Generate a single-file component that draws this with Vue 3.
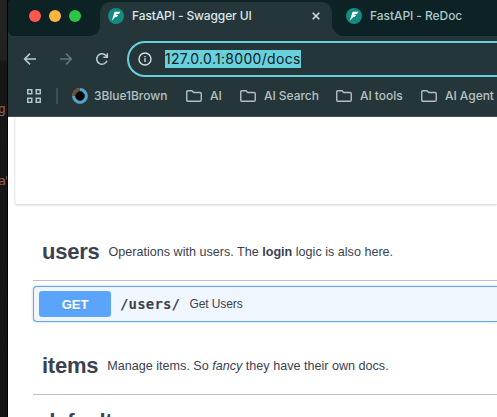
<script setup>
const folders = [
  { label: 'AI', cls: 'f-ai' },
  { label: 'AI Search', cls: 'f-search' },
  { label: 'AI tools', cls: 'f-tools' },
  { label: 'AI Agent', cls: 'f-agent' },
]
</script>

<template>
  <div class="screen">
    <aside class="backdrop">
      <span class="code first">g</span>
      <span class="code second">a'</span>
    </aside>
    <div class="browser">
      <header class="strip">
        <div class="lights">
          <i class="red"></i><i class="yellow"></i><i class="green"></i>
        </div>
        <div class="tab active">
          <svg class="bolt" viewBox="0 0 16 16"><circle cx="8" cy="8" r="8" fill="#128c80" /><path d="M6.6 3.8H12.4L10.9 6H8.6L8.2 6.8H10.3L8.8 9H7.2L3.8 12.8Z" fill="#fff" /></svg>
          <span class="title t1">FastAPI - Swagger UI</span>
          <svg class="close" viewBox="0 0 8 8"><path d="M.7.7 7.3 7.3M7.3.7.7 7.3" stroke="#d9e2e3" stroke-width="1.5" /></svg>
        </div>
        <div class="tab other">
          <svg class="bolt" viewBox="0 0 16 16"><circle cx="8" cy="8" r="8" fill="#128c80" /><path d="M6.6 3.8H12.4L10.9 6H8.6L8.2 6.8H10.3L8.8 9H7.2L3.8 12.8Z" fill="#fff" /></svg>
          <span class="title t2">FastAPI - ReDoc</span>
        </div>
      </header>
      <div class="toolbar">
        <svg class="nav" viewBox="0 0 14 14"><path d="M13 7H1.8M7 1.6 1.6 7 7 12.4" /></svg>
        <svg class="nav dim" viewBox="0 0 14 14"><path d="M1 7H12.2M7 1.6 12.4 7 7 12.4" /></svg>
        <svg class="nav" viewBox="0 0 14 14"><path d="M11.9 8.7A5.2 5.2 0 1 1 10.9 3.6L12.3 5M12.3 1.2V5.2H8.3" /></svg>
        <div class="address">
          <svg class="info" viewBox="0 0 14 14"><circle cx="7" cy="7" r="6" /><path d="M7 6.3V10.1M7 3.9V5.2" /></svg>
          <span class="url">127.0.0.1:8000/docs</span>
        </div>
      </div>
      <nav class="bookmarks">
        <svg class="apps" viewBox="0 0 14 14"><path d="M.75.75h4v4h-4zM9.25.75h4v4h-4zM.75 9.25h4v4h-4zM9.25 9.25h4v4h-4z" /></svg>
        <i class="sep"></i>
        <svg class="eye" viewBox="0 0 16 16"><circle cx="8" cy="8" r="6.3" fill="#285069" stroke="#5b9fc4" stroke-width="3.2" /><path d="M1.7 8A6.3 6.3 0 0 1 8 1.7" fill="none" stroke="#794b2b" stroke-width="3.2" /><circle cx="8" cy="8" r="4.4" fill="#020304" stroke="#13232e" stroke-width=".8" /></svg>
        <span class="label brown">3Blue1Brown</span>
        <div v-for="f in folders" :key="f.label" class="folder" :class="f.cls">
          <svg viewBox="0 0 16 12"><path d="M.75 10V2Q.75.75 2 .75H6L7.7 2.5H14Q15.25 2.5 15.25 3.7V10Q15.25 11.25 14 11.25H2Q.75 11.25.75 10Z" /></svg>
          <span class="label">{{ f.label }}</span>
        </div>
      </nav>
      <main class="page">
        <div class="panel"></div>
        <section class="docs">
          <div class="tag">
            <h3 class="users">users</h3>
            <p class="d1">Operations with users. The <b>login</b> logic is also here.</p>
          </div>
          <div class="operation">
            <span class="method">GET</span>
            <code>/users/</code>
            <span class="summary">Get Users</span>
          </div>
          <div class="tag second">
            <h3 class="items">items</h3>
            <p class="d2">Manage items. So <em>fancy</em> they have their own docs.</p>
          </div>
          <div class="tag last"><h3 class="default">default</h3></div>
        </section>
      </main>
    </div>
  </div>
</template>

<style>
body { margin: 0; overflow: hidden; }
</style>

<style scoped>
* { box-sizing: border-box; }
svg { display: block; flex: none; }
.screen { width: 497px; height: 417px; overflow: hidden; display: flex; background: #151515; }
.backdrop { width: 8px; flex: none; overflow: hidden; background: linear-gradient(#242424 0, #202020 60px, #171717 61px, #151515 100%); border-right: 1px solid #000; display: flex; flex-direction: column; }
.code { font: 13px/16px "DejaVu Sans Mono", monospace; color: #91604d; height: 16px; }
.code.first { margin: 101px 0 0 -2px; }
.code.second { margin: 56px 0 0 -2px; letter-spacing: -3px; }
.browser { width: 489px; flex: none; height: 417px; border-radius: 6px 0 0; overflow: hidden; background: #24363a; }
.strip { height: 36px; display: flex; background: #24363a; }
.lights { width: 92px; flex: none; display: flex; gap: 8px; padding: 10px 0 0 21px; background: #0d2224; border-radius: 0 0 10px 6px; }
.lights i { width: 12px; height: 12px; border-radius: 50%; }
.red { background: #ff5750; }
.yellow { background: #ffb53a; }
.green { background: #2bc545; }
.tab { display: flex; align-items: center; height: 36px; flex: none; }
.active { width: 232px; background: linear-gradient(#0d2224, #0d2224) 0 0 / 100% 18px no-repeat; position: relative; padding: 0 12px 4px 8px; z-index: 0; }
.active::before { content: ""; position: absolute; z-index: -1; inset: 2px 0 0; background: #24363a; border-radius: 10px 10px 0 0; }
.other { width: 165px; background: #0d2224; border-radius: 0 0 0 12px; padding: 0 0 4px 14px; }
.bolt { width: 16px; height: 16px; }
.title { font: 500 12px/16px Inter, sans-serif; margin-left: 8px; white-space: nowrap; color: #dce6e7; }
.t1 { letter-spacing: -.12px; }
.t2 { color: #afc8ca; letter-spacing: -.06px; }
.close { width: 8px; height: 8px; margin-left: auto; }
.toolbar { height: 46px; display: flex; align-items: center; padding-left: 15px; }
.nav { width: 14px; height: 14px; margin-right: 22px; fill: none; stroke: #b6cdcf; stroke-width: 1.5; }
.dim { stroke: #60777b; }
.address { width: 384px; height: 36px; border: 2px solid #68cfdd; border-right: 0; border-radius: 18px 0 0 18px; margin-left: -4px; padding-left: 9px; display: flex; align-items: center; flex: none; }
.info { width: 14px; height: 14px; fill: none; stroke: #d7dfdf; stroke-width: 1.4; }
.url { margin-left: 13px; font: 14px/18px Inter, sans-serif; letter-spacing: .31px; background: #68cfdd; color: #0b1c20; height: 18px; white-space: nowrap; }
.bookmarks { height: 35px; padding: 0 0 7px 19px; display: flex; align-items: center; border-bottom: 1px solid #3c4b4e; }
.apps { width: 14px; height: 14px; fill: none; stroke: #b5c5c4; stroke-width: 1.5; }
.sep { width: 2px; height: 16px; background: #3b5054; margin: 0 14px 0 15px; }
.eye { width: 16px; height: 16px; }
.label { font: 500 12px/16px Inter, sans-serif; color: #b7c2c1; white-space: nowrap; letter-spacing: -.04px; }
.brown { margin-left: 6px; width: 75px; }
.folder { display: flex; align-items: center; flex: none; }
.folder svg { width: 16px; height: 12px; fill: none; stroke: #b5bebc; stroke-width: 1.4; margin-right: 8px; }
.f-ai { width: 54px; margin-left: 17px; }
.f-search { width: 96px; }
.f-tools { width: 85px; }
.page { height: 300px; background: #fff; overflow: hidden; padding: 0 0 0 7px; color: #3b4151; font-family: "Liberation Sans", Arial, sans-serif; }
.panel { height: 87px; border-left: 1px solid #f5f5f5; box-shadow: 0 1px 2px rgba(0,0,0,.2); }
.docs { padding: 27px 0 0 18px; }
.tag { height: 50px; border-bottom: 1px solid #bfc0c4; display: flex; align-items: center; padding: 0 0 7px 9px; }
h3 { margin: 0; font-size: 22px; line-height: 26px; letter-spacing: -.25px; }
p { margin: 0 0 0 9px; font-size: 12.6px; line-height: 18px; white-space: nowrap; }
.operation { margin: 5px 0 0; height: 36px; display: flex; align-items: center; border: 1px solid #5aa5f7; border-right: 0; border-radius: 4px 0 0 4px; background: #eff6fe; box-shadow: 0 0 3px rgba(0,0,0,.19); padding-left: 5px; }
.method { width: 72px; height: 26px; border-radius: 3px; background: #5aa5f9; color: #fff; font-size: 13px; line-height: 27px; font-weight: 700; text-align: center; text-shadow: 0 1px 0 rgba(0,0,0,.1); }
code { font: 700 14px/20px "DejaVu Sans Mono", monospace; letter-spacing: .17px; margin-left: 9px; width: 60px; }
.summary { font-size: 12px; letter-spacing: -.1px; margin-left: 9.5px; }
.second.tag { margin-top: 19px; height: 54px; padding-bottom: 3px; }
.last { height: 54px; border: 0; padding-bottom: 0; }
</style>
